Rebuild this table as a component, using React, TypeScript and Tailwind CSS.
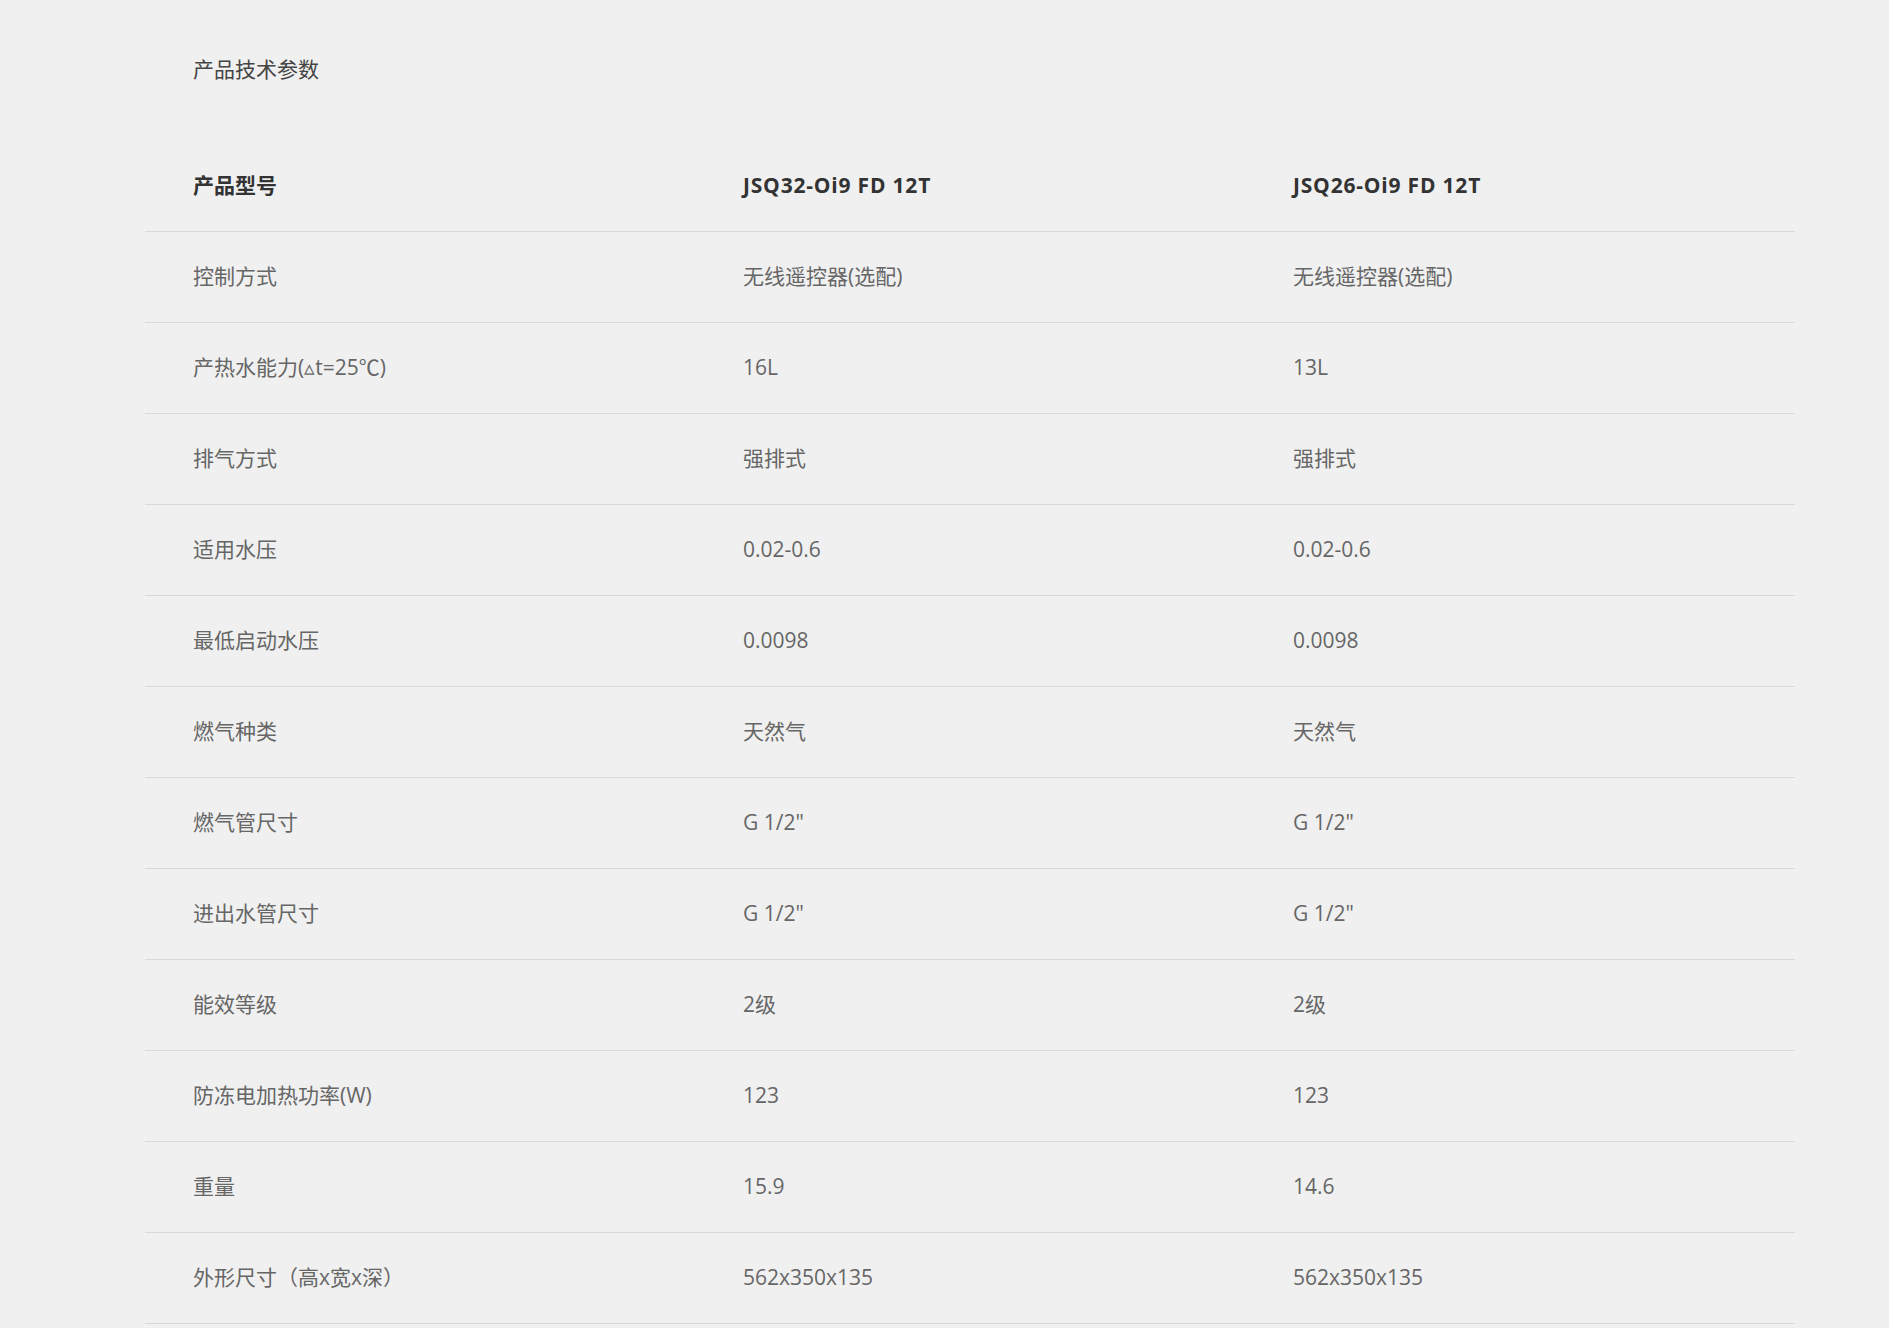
const models = ['JSQ32-Oi9 FD 12T', 'JSQ26-Oi9 FD 12T']

const specs: [string, string, string][] = [
  ['控制方式', '无线遥控器(选配)', '无线遥控器(选配)'],
  ['产热水能力(▵t=25℃)', '16L', '13L'],
  ['排气方式', '强排式', '强排式'],
  ['适用水压', '0.02-0.6', '0.02-0.6'],
  ['最低启动水压', '0.0098', '0.0098'],
  ['燃气种类', '天然气', '天然气'],
  ['燃气管尺寸', 'G 1/2"', 'G 1/2"'],
  ['进出水管尺寸', 'G 1/2"', 'G 1/2"'],
  ['能效等级', '2级', '2级'],
  ['防冻电加热功率(W)', '123', '123'],
  ['重量', '15.9', '14.6'],
  ['外形尺寸（高x宽x深）', '562x350x135', '562x350x135'],
]

const App = () => {
  return (
    <div
      className="min-h-screen bg-[#f0f0f0]"
      style={{ fontFamily: '"Open Sans", "Noto Sans CJK SC", sans-serif' }}
    >
      <div className="ml-[145px] w-[1650px] pt-[54px]">
        {/* Title */}
        <h2 className="pl-[48px] text-[21px] leading-[30px] text-[#444]">产品技术参数</h2>

        {/* Spec table */}
        <div className="mt-[57px]">
          <div className="grid grid-cols-3 h-[91px] items-center border-b border-[#d9d9d9]">
            <div className="pl-[48px] text-[21px] font-bold text-[#333]">产品型号</div>
            {models.map((m) => (
              <div key={m} className="pl-[48px] text-[21px] font-bold tracking-[0.8px] text-[#333]">{m}</div>
            ))}
          </div>
          {specs.map(([label, a, b]) => (
            <div key={label} className="grid grid-cols-3 h-[91px] items-center border-b border-[#d9d9d9]">
              <div className="pl-[48px] text-[21px] text-[#666]">{label}</div>
              <div className="pl-[48px] text-[21px] text-[#666]">{a}</div>
              <div className="pl-[48px] text-[21px] text-[#666]">{b}</div>
            </div>
          ))}
        </div>
      </div>
    </div>
  )
}

export default App
